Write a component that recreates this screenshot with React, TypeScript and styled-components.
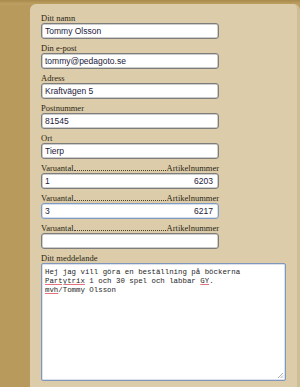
import React from 'react';
import styled, { createGlobalStyle } from 'styled-components';

const GlobalStyle = createGlobalStyle`
  html, body {
    margin: 0;
    padding: 0;
    background: #b89b5c;
  }
  #root {
    min-height: 100vh;
  }
`;

const Page = styled.div`
  display: flex;
  min-height: 100vh;
  padding: 4px 0 0 30px;
  box-sizing: border-box;
  background: linear-gradient(#a88a4c 0px, #bda062 4px, #b89b5c 5px);
`;

const Panel = styled.form`
  flex: 1;
  background: #dccca9;
  border-radius: 6px 6px 0 0;
  border-right: 3px solid #cfbd96;
  padding: 9px 0 0 11px;
  display: flex;
  flex-direction: column;
`;

const Field = styled.div`
  display: flex;
  flex-direction: column;
  margin-bottom: 4px;
`;

const Label = styled.label`
  font-family: "Liberation Serif", "DejaVu Serif", serif;
  font-size: 8.5px;
  line-height: 10px;
  height: 10px;
  color: #2a2414;
  width: 178px;
  display: flex;
  align-items: flex-end;
  white-space: nowrap;
`;

const LabelPart = styled.span`
  flex-shrink: 0;
`;

// dotted leader between the two column titles
const Dots = styled.span`
  flex: 1;
  height: 0;
  margin: 0 0.5px 2px;
  border-bottom: 1px dotted #4a402a;
`;

const Input = styled.input`
  width: 178px;
  height: 16px;
  box-sizing: border-box;
  margin: 0;
  padding: 0 5px 0 3px;
  border: 1px solid #7d7d7d;
  box-shadow: inset 0 0 0 0.5px #9c9c9c;
  border-radius: 3px;
  background: #fff;
  font-family: "Liberation Sans", Arial, sans-serif;
  font-size: 8.5px;
  color: #24203a;
  outline: none;
`;

const QtyRow = styled.div<{ $focus?: boolean }>`
  width: 178px;
  height: 16px;
  box-sizing: border-box;
  padding: 0 5px 0 3px;
  border: 1px solid ${(p) => (p.$focus ? '#7f9bc4' : '#7d7d7d')};
  box-shadow: inset 0 0 0 0.5px ${(p) => (p.$focus ? '#a9bddb' : '#9c9c9c')};
  border-radius: 3px;
  background: #fff;
  font-family: "Liberation Sans", Arial, sans-serif;
  font-size: 8.5px;
  color: #24203a;
  display: flex;
  align-items: center;
  justify-content: space-between;
`;

const MessageBox = styled.div`
  position: relative;
  width: 245px;
  height: 118px;
  box-sizing: border-box;
  border: 1px solid #7f96bd;
  box-shadow: inset 0 0 0 0.5px #b5c4dc;
  border-radius: 2px;
  background: #fff;
  padding: 4px 3px;
  font-family: "Liberation Mono", "Courier New", monospace;
  font-size: 7.4px;
  line-height: 9px;
  color: #1e1e1e;
  white-space: pre;
`;

const Misspelled = styled.span`
  text-decoration: underline #e8707c;
  text-decoration-thickness: 1px;
  text-underline-offset: 1px;
`;

const Grip = styled.svg`
  position: absolute;
  right: 1px;
  bottom: 1px;
`;

const orders = [
  { qty: '1', art: '6203', focus: false },
  { qty: '3', art: '6217', focus: true },
  { qty: '', art: '', focus: false },
];

const App = () => {
  return (
    <>
      <GlobalStyle />
      <Page>
        <Panel>
          <Field>
            <Label>Ditt namn</Label>
            <Input defaultValue="Tommy Olsson" />
          </Field>
          <Field>
            <Label>Din e-post</Label>
            <Input defaultValue="tommy@pedagoto.se" />
          </Field>
          <Field>
            <Label>Adress</Label>
            <Input defaultValue="Kraftvägen 5" />
          </Field>
          <Field>
            <Label>Postnummer</Label>
            <Input defaultValue="81545" />
          </Field>
          <Field>
            <Label>Ort</Label>
            <Input defaultValue="Tierp" />
          </Field>
          {orders.map((o, i) => (
            <Field key={i}>
              <Label>
                <LabelPart>Varuantal</LabelPart>
                <Dots />
                <LabelPart>Artikelnummer</LabelPart>
              </Label>
              <QtyRow $focus={o.focus}>
                <span>{o.qty}</span>
                <span>{o.art}</span>
              </QtyRow>
            </Field>
          ))}
          <Field>
            <Label>Ditt meddelande</Label>
            <MessageBox>
              {'Hej jag vill göra en beställning på böckerna\n'}
              <Misspelled>Partytrix</Misspelled>
              {' 1 och 30 spel och labbar '}
              <Misspelled>GY</Misspelled>
              {'.\n'}
              <Misspelled>mvh</Misspelled>
              {'/Tommy Olsson'}
              <Grip width="7" height="7" viewBox="0 0 7 7">
                <path d="M6 1 L1 6 M6 3.5 L3.5 6 M6 5.5 L5.5 6" stroke="#9a9a9a" strokeWidth="0.8" />
              </Grip>
            </MessageBox>
          </Field>
        </Panel>
      </Page>
    </>
  );
};

export default App;
